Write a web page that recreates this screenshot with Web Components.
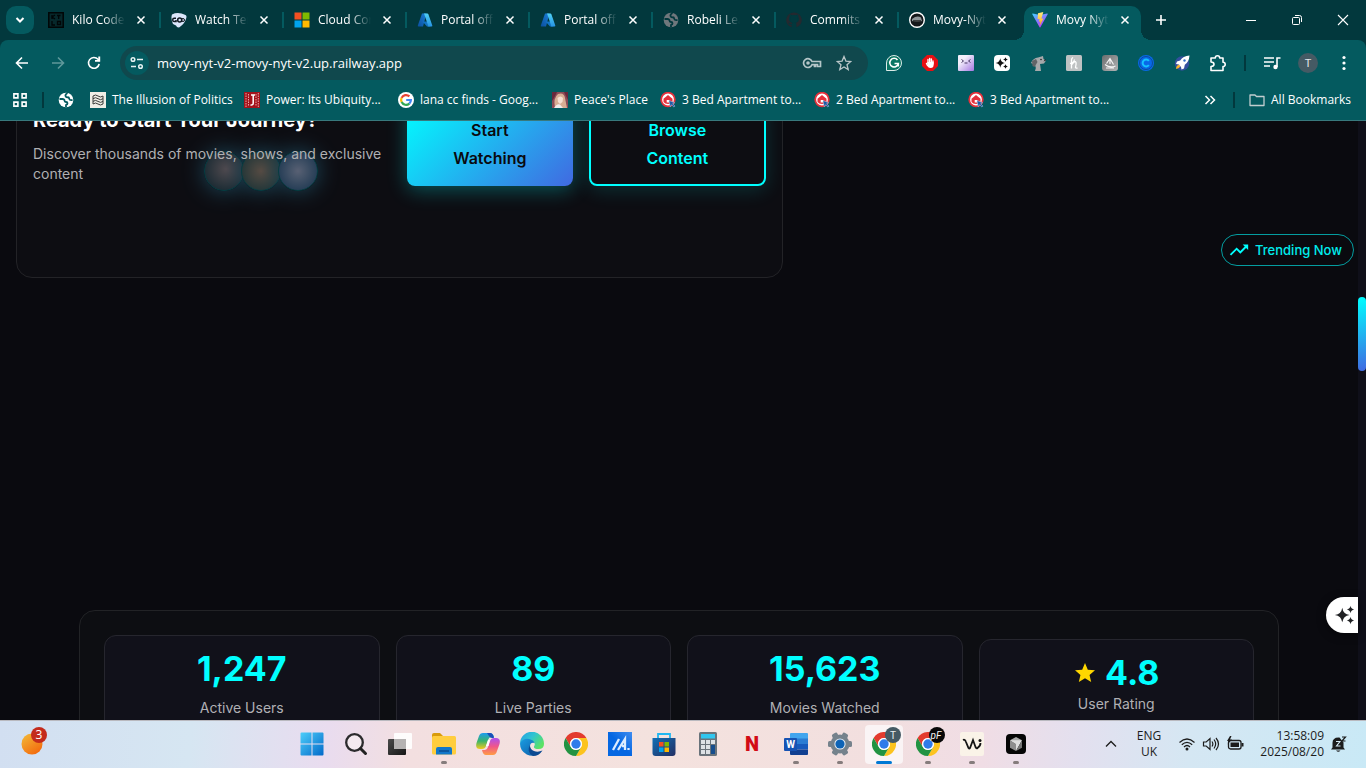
<!DOCTYPE html>
<html lang="en">
<head>
<meta charset="utf-8">
<title>Movy Nyt</title>
<style>
html,body{height:100%;margin:0}
body{font-family:"Open Sans","Noto Sans",sans-serif;font-size:12px;overflow:hidden;background:#0a0a0f;
--strip:#02383d;--bar:#045a5f;--field:#10484d;--cyan:#00ffff}
</style>
</head>
<body>
<desktop-screen></desktop-screen>
<script>
const chrome = `<path fill="#e33b2e" d="M1.6 6A12 12 0 0 1 22.4 6H12A6 6 0 0 0 6.8 15Z"/><path fill="#fcc31e" d="M22.4 6A12 12 0 0 1 12 24L17.2 15A6 6 0 0 0 12 6Z"/><path fill="#229342" d="M12 24A12 12 0 0 1 1.6 6L6.8 15A6 6 0 0 0 17.2 15Z"/><circle cx="12" cy="12" r="6" fill="#fff"/><circle cx="12" cy="12" r="4.7" fill="#2f7bea"/>`;
const globe = c => `<circle cx="8" cy="8" r="7.3" fill="${c[0]}"/><path d="M1.500 7h3q2 0 2 1.500T8 10t1.500 1.300-1.500 1.700v2M9.500 1q-2.500 1.500-2 3t2 1.300 1.800 1.500T14.500 8" fill="none" stroke="${c[1]}" stroke-width="1.800"/>`;
const azure = `<defs><linearGradient id="a" x1="0" y1="1" x2="1" y2="0"><stop stop-color="#0b4f9e"/><stop offset="1" stop-color="#1b7ed6"/></linearGradient><linearGradient id="b" y2="1" x2="0"><stop stop-color="#4fd0f5"/><stop offset="1" stop-color="#2793e3"/></linearGradient></defs><path fill="url(#a)" d="M5 1.500h4.500L6 14.500H1.500q-1 0-.7-1Z"/><path fill="#1273c4" d="M5.500 9.500h6l2 5H10Z"/><path fill="url(#b)" d="M6.500 1.500h4q.6 0 .8.6l4 11.300q.3 1.100-.8 1.100h-4q.9-.2.6-1.100L7.200 2.100q-.2-.6-.7-.6Z"/>`;
const house = `<circle cx="8" cy="7.500" r="6.800" fill="#fff" stroke="#e5303b" stroke-width="1.800"/><path d="M8 3 3.500 6.800V10q1.500 2 4.500 2t4.500-2V6.800Z" fill="#e5303b"/><path d="M6.700 8h2.600v2.500H6.700Z" fill="#fff"/><path d="M9 8.500l1.200 6.300 1.400-2 2.400 2.300 1-1-2.300-2.300 2-1Z" fill="#1c58a4" stroke="#b7d3f3" stroke-width=".5"/>`;
const sparkle = c => `<path fill="${c}" d="M9 4q1 7 8 8-7 1-8 8-1-7-8-8 7-1 8-8ZM18 2q.6 3.400 4 4-3.400.6-4 4-.6-3.400-4-4 3.400-.6 4-4ZM18 14q.6 3.400 4 4-3.400.6-4 4-.6-3.400-4-4 3.400-.6 4-4Z"/>`;
/* name: [viewBox size, markup] */
const ICONS = {
down:[16,`<path d="M4.500 6 8 9.500 11.500 6" fill="none" stroke="#fff" stroke-width="2"/>`],
kilo:[16,`<path fill="#06282b" stroke="#010607" stroke-width="1.500" d="M.8.8h14.400v14.400H.8z"/><path d="M4 3v4m3-4-3 2 3 2M9 3.500h3.500M10.700 3v4M4 9v4h3M9.500 9.500h3v3h-3z" fill="none" stroke="#010607" stroke-width="1.300"/>`],
watch:[16,`<path fill="#dbe6fb" d="M1 2.500Q7-.5 14.500 3q1.500 1 .8 3-1 5-6.800 9.300Q6 16 5 13.500L2 12Q-.5 6 1 2.500Z"/><path d="M5 6.300H3.200q-1.500 0-1.500 1.600t1.500 1.600H5V8" fill="none" stroke="#101820" stroke-width="1.500"/><circle cx="8.700" cy="8" r="2" fill="none" stroke="#101820" stroke-width="1.500"/><circle cx="12" cy="8" r="1.500" fill="none" stroke="#101820"/>`],
ms:[16,`<path fill="#f25022" d="M.5.5h7v7h-7z"/><path fill="#7fba00" d="M8.500.5h7v7h-7z"/><path fill="#00a4ef" d="M.5 8.500h7v7h-7z"/><path fill="#ffb900" d="M8.500 8.500h7v7h-7z"/>`],
azure:[16,azure],
globe:[16,globe(['#fff','#045a5f'])],
globegrey:[16,globe(['#6f777c','#02383d'])],
github:[16,`<path fill="#24292f" d="M8 .5a7.500 7.500 0 0 0-2.400 14.700v-2.500q-2 .4-2.600-1l-.8-1 1.500.4q.8 1.400 2.200.8l.4-1.200Q3 10.300 3 7q0-1.200.8-2.200-.3-1 .2-2.200 1 0 2.200 1h3.600q1.200-1 2.200-1 .5 1.200.2 2.200.8 1 .8 2.200 0 3.300-3.300 3.700.7.600.7 1.700v2.800A7.500 7.500 0 0 0 8 .5Z"/><circle cx="8" cy="7" r="4" fill="#02383d"/>`],
movy:[16,`<circle cx="8" cy="8" r="7.300" fill="#14171a" stroke="#fff" stroke-width="1.400"/><path d="M3 7q5-4 9-1.500L13 9q-5 2-10 0Z" fill="#8f9699"/><path d="M4 9h8" stroke="#111" stroke-width="1.300"/>`],
vite:[16,`<defs><linearGradient id="a" x2=".6" y2="1"><stop stop-color="#41d1ff"/><stop offset="1" stop-color="#bd34fe"/></linearGradient><linearGradient id="b" y2="1" x2="0"><stop stop-color="#ffea83"/><stop offset="1" stop-color="#ffa800"/></linearGradient></defs><path fill="url(#a)" d="m.3 2.200 7.300 13q.4.600.8 0l7.300-13q.2-.7-.5-.6L8 3 .8 1.600q-.7-.1-.5.6Z"/><path fill="url(#b)" d="M11.300.1 6 1.200l-.4 6 1.900-.4-.6 2.900 1.500-.4-1 4.900 4-7.800-2 .3Z"/>`],
close:[12,`<path d="m2.500 2.500 7 7m0-7-7 7" stroke="#fff" stroke-width="1.500"/>`],
plus:[16,`<path d="M8 3v10M3 8h10" stroke="#fff" stroke-width="1.600"/>`],
min:[12,`<path d="M1 6.500h10" stroke="#fff"/>`],
max:[12,`<rect x="1.500" y="3.500" width="7" height="7" rx="1" fill="none" stroke="#fff"/><path d="M4 1.500h4.500q2 0 2 2V8" fill="none" stroke="#fff"/>`],
winx:[12,`<path d="m1 1 10 10m0-10L1 11" stroke="#fff" stroke-width="1.100"/>`],
back:[16,`<path d="M14 8H3M8 2.500 2.500 8 8 13.500" fill="none" stroke="#fff" stroke-width="1.600"/>`],
fwd:[16,`<path d="M2 8h11M8 2.500 13.500 8 8 13.500" fill="none" stroke="#5f989b" stroke-width="1.600"/>`],
reload:[16,`<path d="M13.200 9A5.400 5.400 0 1 1 12 4.300L13.500 6" fill="none" stroke="#fff" stroke-width="1.600"/><path d="M14.200 1.500v5.300H9V5h3.300V1.500Z" fill="#fff"/>`],
tune:[16,`<g fill="none" stroke="#e6f2f2" stroke-width="1.500"><circle cx="4" cy="4.500" r="1.800"/><path d="M8 4.500h6M2 11.500h5"/><circle cx="11.500" cy="11.500" r="1.800"/></g>`],
key:[20,`<g fill="none" stroke="#b5c6c8" stroke-width="1.700"><path d="M10 8.500h8.500v5h-3v-2h-2v2h-1v-1.800H10A4.400 4.400 0 1 1 10 8.500Z"/></g><circle cx="6" cy="10" r="1.800" fill="#b5c6c8"/>`],
star:[16,`<path d="m8 1.500 1.900 4.600 4.900.4-3.800 3.200 1.200 4.800L8 11.900l-4.200 2.600L5 9.700 1.200 6.500l4.900-.4Z" fill="none" stroke="#b9c6c8" stroke-width="1.300"/>`],
grammarly:[16,`<path d="M.5 15.500V8A7.500 7.500 0 1 1 8 15.500Z" fill="#0b7563" stroke="#dcebe8"/><path d="M11.500 5A4.300 4.300 0 1 0 12.300 8.500H8.500m3.800 0v3" fill="none" stroke="#fff" stroke-width="1.600"/>`],
hand:[16,`<path fill="#e70f13" d="M5 0h6l5 5v6l-5 5H5l-5-5V5Z"/><path d="M6 8V4.500M7.700 8V3.500M9.400 8V4M11 9V6M5.500 10.500 4.500 8.500" stroke="#fff" stroke-width="1.400" stroke-linecap="round"/><path fill="#fff" d="M5.300 7h6.300v3q0 3-3 3t-3.300-3Z"/>`],
face:[16,`<defs><linearGradient id="a" x2="1" y2="1"><stop offset=".3" stop-color="#f3effb"/><stop offset="1" stop-color="#a476e2"/></linearGradient></defs><rect width="16" height="16" rx="1" fill="url(#a)"/><path d="m3.500 4.500 2 1.500-2 1.500m9-3-2 1.500 2 1.500M6.500 8h3" fill="none" stroke="#4b3a66"/>`],
sparkbox:[16,`<rect width="16" height="16" rx="4" fill="#fff"/><svg x="1" y="1" width="14" height="14" viewBox="0 0 24 24">${sparkle('#111')}</svg>`],
dog:[16,`<path fill="#a7a9ab" d="M1 8q2-5 7-5.500L13 1l.5 3L16 5.500 14 8.500l-4 .5 1 7H5q1.500-3.500 0-6Z"/><path d="m2 6 4-2 1.500 3L4.500 12 2.500 11Z" fill="#606467"/><circle cx="11" cy="4.500" r=".8" fill="#222"/><path d="m13.500 6.500 2.500-1-.8-1.500Z" fill="#222"/>`],
honey:[16,`<rect width="16" height="16" rx="1.500" fill="#bfc2c3"/><path d="M5.500 13.500V5q0-2 1.600-2.500M5.500 10Q9 5 10 7.500q.4 1.500-.5 5 .5 1 2 .3M4 8.500q4-1 4.500-4" fill="none" stroke="#fff" stroke-width="1.300"/>`],
sail:[16,`<defs><linearGradient id="a" y2="1"><stop stop-color="#6b6d6e"/><stop offset="1" stop-color="#b3b4b5"/></linearGradient></defs><rect width="16" height="16" rx="3" fill="url(#a)"/><path d="M4.500 8.500 8 3.500 11.500 9.500M8 4v5M3 9.500q5 4 10.500 1.500M4 13h8" fill="none" stroke="#f5f5f5" stroke-width="1.200"/>`],
blue:[16,`<circle cx="8" cy="8" r="8" fill="#0868e8"/><circle cx="8" cy="8" r="6.500" fill="none" stroke="#0a4d9c"/><path d="M10.800 6A3.400 3.400 0 1 0 10.800 10" fill="none" stroke="#16c2ff" stroke-width="2"/>`],
rocket:[16,`<circle cx="8" cy="8.500" r="7.200" fill="#334f9d"/><path d="M2 14q0-4 3.500-4.500l1 1.500Q5.500 13.500 2 14Z" fill="#f8b12b"/><path fill="#fff" d="M15.500.5Q9 1 6.200 5.500L3 6.500 2 9l3 .5L7 12l.5 2.500 2.500-1 .8-3.700Q15 7 15.500.5Z"/><circle cx="10.500" cy="5.500" r="1.200" fill="#3770c8"/>`],
puzzle:[18,`<path d="M2 4h4.300a2.200 2.200 0 0 1 4.400 0H14v4.200a2.200 2.200 0 0 1 0 4.400V16.500H2v-4q3-.2 3-2.300T2 8Z" fill="none" stroke="#fff" stroke-width="1.600" stroke-linejoin="round"/>`],
queue:[18,`<path d="M1 4h10M1 8h10M1 12h6" stroke="#fff" stroke-width="1.600"/><path d="M14 13V4h3.500" fill="none" stroke="#fff" stroke-width="1.600"/><circle cx="12.500" cy="13" r="2.200" fill="#fff"/>`],
menu:[16,`<g fill="#fff"><circle cx="8" cy="2.500" r="1.600"/><circle cx="8" cy="8" r="1.600"/><circle cx="8" cy="13.500" r="1.600"/></g>`],
avatar:[20,`<circle cx="10" cy="10" r="10" fill="#455a64"/><text x="10" y="14" text-anchor="middle" font-size="11" fill="#e2e8ea" font-family="Roboto">T</text>`],
apps:[16,`<g fill="none" stroke="#fff" stroke-width="1.600"><path d="M1.900 1.900h4v4h-4zM10.100 1.900h4v4h-4zM1.900 10.100h4v4h-4zM10.100 10.100h4v4h-4z"/></g>`],
paper:[16,`<path fill="#efeee6" d="M0 0h16v16H0z"/><path d="M3 4q2.500-2 5 0t5 0v8q-2.500 2-5 0t-5 0ZM3 6.700q2.500-2 5 0t5 0M3 9.400q2.500-2 5 0t5 0" fill="none" stroke="#3b3c3a"/>`],
jred:[16,`<path fill="#a3121b" d="M0 0h16v16H0z"/><path d="M2 1v14M4.500 2v12M12 2v12M14.300 1v14" stroke="#e9a7a7" stroke-dasharray="1.500 1"/><path d="M7 3h4M9.200 3v8q0 2.500-2.700 2" fill="none" stroke="#fff" stroke-width="1.500"/>`],
google:[16,`<circle cx="8" cy="8" r="8" fill="#fff"/><g fill="none" stroke-width="2.200"><path d="M11.400 4.400A4.900 4.900 0 0 0 3.600 5.900" stroke="#ea4335"/><path d="M3.600 5.900a4.900 4.900 0 0 0 0 4.200" stroke="#fbbc05"/><path d="M3.600 10.100a4.900 4.900 0 0 0 7.700 1.500" stroke="#34a853"/><path d="M11.300 11.600A4.900 4.900 0 0 0 12.900 8H8.200" stroke="#4285f4"/></g>`],
photo:[16,`<path fill="#8c4b57" d="M0 0h16v16H0z"/><path d="M3 16Q1 6 6 2q6-2 7 4l2 10Z" fill="#d8ad94"/><path d="M5.500 6q3-3 5.500 0l-.5 4-2.500 2-2-2Z" fill="#f6dfd2"/><path d="M2 16q3-5 6-3.500l3 3.500Z" fill="#f2ecec"/><path d="M0 0h5L2 6l-2 3ZM12 0h4v8Z" fill="#67283c"/>`],
house:[16,house],
more:[12,`<path d="m1.500 2 4 4-4 4M6.500 2l4 4-4 4" fill="none" stroke="#fff" stroke-width="1.500"/>`],
folder:[16,`<path d="M1 3h5l1.500 1.500H15V13.500H1Z" fill="none" stroke="#c1cdcf" stroke-width="1.300" stroke-linejoin="round"/>`],
trend:[24,`<path fill="#0ff" d="m16 6 2.290 2.290-4.880 4.880-4-4L2 16.590 3.410 18l6-6 4 4 6.300-6.290L22 12V6z"/>`],
gold:[24,`<path fill="#ffd700" d="M12 17.270 18.180 21l-1.640-7.030L22 9.240l-7.190-.61L12 2 9.190 8.630 2 9.240l5.460 4.730L5.820 21z"/>`],
sparkle:[24,sparkle('#202124')],
weather:[24,`<defs><linearGradient id="a" x2=".7" y2="1"><stop stop-color="#f2bd3a"/><stop offset="1" stop-color="#f36a0d"/></linearGradient></defs><circle cx="12" cy="12" r="10.500" fill="url(#a)"/>`],
start:[24,`<defs><linearGradient id="a" gradientUnits="userSpaceOnUse" x2="24" y2="24"><stop stop-color="#4fd0fb"/><stop offset="1" stop-color="#0067c8"/></linearGradient></defs><path fill="url(#a)" d="M.5 1.500q0-1 1-1h10v11H.5zM12.500.5h10q1 0 1 1v10h-11zM.5 12.500h11v11h-10q-1 0-1-1zM12.500 12.500h11v10q0 1-1 1h-10z"/>`],
search:[24,`<circle cx="10.500" cy="10.500" r="8.300" fill="#f4eaf0" stroke="#2b2b2d" stroke-width="2.300"/><path d="m16.500 16.500 5 5" stroke="#222" stroke-width="3" stroke-linecap="round"/>`],
task:[24,`<defs><linearGradient id="a" y2="1"><stop stop-color="#4b4b4b"/><stop offset="1" stop-color="#151515"/></linearGradient></defs><rect y="7" width="18" height="16" rx="1" fill="url(#a)"/><rect x="6" y="1" width="18" height="16" rx="1" fill="#fff" fill-opacity=".9"/><path fill="#b5b2b2" d="M6 7h12v10H6z"/>`],
files:[24,`<path fill="#d99b0b" d="M0 3q0-2 2-2h6l3 3v4H0Z"/><rect y="4" width="24" height="18.500" rx="1.500" fill="#ffcd3e"/><path d="M4 22.500V17q0-2 2-2h12q2 0 2 2v5.500Z" fill="#1277c9"/><path d="M7 19h10" stroke="#0a4c91" stroke-width="1.500"/>`],
copilot:[24,`<defs><linearGradient id="a" y2="1" x2="0"><stop stop-color="#1d9cf0"/><stop offset=".5" stop-color="#39b56b"/><stop offset="1" stop-color="#f3ca1c"/></linearGradient><linearGradient id="b" y2="1" x2="0"><stop stop-color="#ac50ef"/><stop offset=".5" stop-color="#f0568a"/><stop offset="1" stop-color="#ff9d43"/></linearGradient></defs><path fill="url(#a)" d="M7 1h7q3 0 4 4h-3q-2 0-3 3l-2 6q-1 3-4 3H4q-5 0-3.500-6L3 4q1-3 4-3Z"/><path fill="url(#b)" d="M17 23h-7q-3 0-4-5h3q2 0 3-3l2-6q1-3 4-3h2q5 0 3.500 6L21 19q-1 4-4 4Z"/><path d="m12 8-2 6h2.500l1.500-6Z" fill="#fff"/><path d="M11 1h3q3 0 4 5h-2q-2 0-3-2Z" fill="#1b4fb8"/>`],
edge:[24,`<defs><linearGradient id="a" x2="1" y2=".6"><stop stop-color="#249de4"/><stop offset=".5" stop-color="#31c4d2"/><stop offset="1" stop-color="#5be264"/></linearGradient><linearGradient id="b" y2="1"><stop stop-color="#1b9de2"/><stop offset="1" stop-color="#0c59a4"/></linearGradient></defs><path fill="url(#a)" d="M0 11.500A12 12 0 0 1 24 12q0 5-5.500 5-5 0-4.500-2.500 2-3-1-5Q6 6 0 11.500Z"/><path fill="url(#b)" d="M0 11.500Q3 6 9 7q5 1 5.500 4-4-1-4.500 3 0 6 6.500 7.500l3-.5A12 12 0 0 1 0 11.500Z"/><path fill="#0b4a92" d="M10 13q-4 7 3 11 6 0 9.500-5.500-4.500 2-8.500.5Q9.500 17 10 13Z"/>`],
chrome:[24,chrome],
asus:[24,`<defs><linearGradient id="a" y2="0" y1="1"><stop offset=".5" stop-color="#0567e2"/><stop offset="1" stop-color="#408cf0"/></linearGradient></defs><path fill="url(#a)" d="M0 0h24v24H0z"/><path d="m5 18 6-11M10 18l7-11v11M14 14h3M20.500 16v2" fill="none" stroke="#dcecff" stroke-width="2.300"/>`],
store:[24,`<defs><linearGradient id="a" y2="1"><stop stop-color="#1270b6"/><stop offset="1" stop-color="#232e62"/></linearGradient></defs><path d="M6 6V2h12v4" fill="none" stroke="#20b7f1" stroke-width="1.800"/><path fill="url(#a)" d="M.5 6h23v15q0 3-3 3h-17q-3 0-3-3Z"/><path fill="#f25022" d="M7 10h4.500v4.500H7z"/><path fill="#7fba00" d="M12.500 10H17v4.500h-4.500z"/><path fill="#00a4ef" d="M7 15.500h4.500V20H7z"/><path fill="#ffb900" d="M12.500 15.500H17V20h-4.500z"/>`],
calc:[24,`<rect x="3" width="18" height="24" rx="1.500" fill="#69737b"/><path fill="#31c6ef" d="M5 2h14v4.500H5z"/><path fill="#dce1e5" d="M5 8h4v4H5zM10 8h4v4h-4zM15 8h4v4h-4zM5 13h4v4H5zM10 13h4v4h-4zM5 18h4v4H5zM10 18h4v4h-4z"/><path fill="#164d8c" d="M15 13h4v9h-4z"/>`],
netflix:[24,`<text x="12" y="19" text-anchor="middle" font-family="Roboto" font-weight="900" font-size="20" fill="#d20b16">N</text>`],
word:[24,`<path fill="#41a5ee" d="M7 1h16q1 0 1 1v5H6V2q0-1 1-1z"/><path fill="#2b7cd3" d="M6 6.500h18V12H6z"/><path fill="#185abd" d="M6 12h18v5.500H6z"/><path fill="#103f91" d="M6 17.500h18V22q0 1-1 1H7q-1 0-1-1z"/><rect y="6" width="13" height="13" rx="1" fill="#1653b3"/><text x="6.500" y="16" text-anchor="middle" font-family="Roboto" font-weight="700" font-size="10" fill="#fff">W</text>`],
gear:[24,`<g fill="#75828c"><circle cx="12" cy="12" r="9.500"/><rect x="9" width="6" height="24" rx="1.500" transform="rotate(30 12 12)"/><rect x="9" width="6" height="24" rx="1.500" transform="rotate(90 12 12)"/><rect x="9" width="6" height="24" rx="1.500" transform="rotate(150 12 12)"/></g><circle cx="12" cy="12" r="5.600" fill="#e8eef3"/><circle cx="12" cy="12" r="4.600" fill="#0d63b6"/>`],
chromet:[32,`<svg x="1" y="5" width="24" height="24" viewBox="0 0 24 24">${chrome}</svg><circle cx="22" cy="8" r="8" fill="#455a64"/><text x="22" y="12" text-anchor="middle" font-family="Roboto" font-size="10" fill="#e9eef0">T</text>`],
chromef:[32,`<svg x="1" y="5" width="24" height="24" viewBox="0 0 24 24">${chrome}</svg><circle cx="22" cy="8" r="8" fill="#080808"/><text x="21" y="12" text-anchor="middle" font-family="Roboto" font-style="italic" font-size="10" fill="#f5f5f5">pF</text>`],
wave:[24,`<rect width="24" height="24" rx="2" fill="#faf3e8"/><path d="M3 8q2-1 3 2l2.500 6q.8 1 1.500 0l3-8 2.500 7q1 2 2 1 3-2 3-5" fill="none" stroke="#151515" stroke-width="1.800"/><circle cx="20" cy="8.500" r="1.500" fill="#151515"/>`],
cube:[24,`<rect x="2" y="2" width="20" height="20" rx="4" fill="#050505"/><path fill="#a9a9a9" d="m12 5 6 3.300L12 12 6 8.300Z"/><path fill="#8e8e8e" d="m6 8.300 6 3.700v7l-6-3.300Z"/><path fill="#dedede" d="M6 8.300h12L12 19v-7Z"/><path fill="#777" d="M18 8.300v7.400L12 19Z"/>`],
up:[12,`<path d="m1 8.500 5-5 5 5" fill="none" stroke="#1c1c1c" stroke-width="1.300"/>`],
wifi:[18,`<g fill="none" stroke="#1c1c1c" stroke-width="1.200"><path d="M1.500 7.500q7.500-7 15 0M3.800 9.800q5.200-5 10.400 0M6 12q3-3 6 0"/></g><circle cx="9" cy="14" r="1.500" fill="#1c1c1c"/>`],
sound:[18,`<g fill="none" stroke="#1c1c1c" stroke-width="1.200"><path d="M1.500 7h2.700L8 3.500v11L4.200 11H1.500ZM10 6.500q1.700 2.500 0 5M12 4.500q3.300 4.500 0 9M14 3q5 6 0 12"/></g>`],
battery:[18,`<rect x="2.500" y="5.500" width="12.500" height="8.500" rx="2" fill="none" stroke="#1c1c1c" stroke-width="1.300"/><path d="M4.500 7.500H13V12H4.500Zm11 .5h2v3.500h-2Z" fill="#1c1c1c"/><path d="M4 1 1 6h2L1.500 9.500 6 4.500H4L5.500 1Z" fill="#1c1c1c"/>`],
bell:[18,`<path d="M2.500 12.500V8q0-5.500 6-5.500h1l4 5v5l1.500 2H1ZM6 15.500h4.500q-2.200 2.500-4.500 0Z" fill="#1c1c1c"/><path d="M6 6.500h4L6.500 11h4" fill="none" stroke="#d7ebf5" stroke-width="1.100"/><path d="M12 2h3.500L12 6h3.500" fill="none" stroke="#1c1c1c" stroke-width="1.200"/>`]
};
function define(tag, css, html){
  customElements.define(tag, class extends HTMLElement{
    constructor(){ super(); this.attachShadow({mode:'open'}); }
    connectedCallback(){
      const t=document.createElement('template');
      t.innerHTML=`<style>*{box-sizing:border-box}button,input{font:inherit;color:inherit;background:none;border:0;margin:0;padding:0}a{color:inherit;text-decoration:none}${css}</style>${typeof html==='function'?html(this):html}`;
      this.shadowRoot.replaceChildren(t.content.cloneNode(true));
    }
  });
}
const ic=(n,s=16)=>`<ui-icon name="${n}" size="${s}"></ui-icon>`;
define('ui-icon',`:host{display:block;flex:none}svg{display:block}`,e=>{
  const [v,m]=ICONS[e.getAttribute('name')], s=e.getAttribute('size')||16;
  return `<svg width="${s}" height="${s}" viewBox="0 0 ${v} ${v}" aria-hidden="true">${m}</svg>`;});

define('browser-tab',`
:host{display:block;position:relative;flex:none;width:117px;height:34px;color:#fff}
.t{display:flex;align-items:center;height:28px;padding:0 8px;gap:8px}
.n{flex:1;min-width:0;text-align:left;white-space:nowrap;overflow:hidden;line-height:20px;-webkit-mask-image:linear-gradient(90deg,#000 60%,transparent);mask-image:linear-gradient(90deg,#000 60%,transparent)}
.x{width:16px;height:16px;display:grid;place-items:center}
:host([active]){background:var(--bar);border-radius:10px 10px 0 0}
:host([active])::before,:host([active])::after{content:"";position:absolute;bottom:0;width:10px;height:10px;background:radial-gradient(circle at 0 0,transparent 10px,var(--bar) 10px)}
:host([active])::before{right:100%}
:host([active])::after{left:100%;background:radial-gradient(circle at 100% 0,transparent 10px,var(--bar) 10px)}
:host([line])::after{content:"";position:absolute;left:119px;top:6px;width:2px;height:16px;background:#045a5f}`,
e=>`<div class="t">${ic(e.getAttribute('icon'))}<button class="n"><slot></slot></button><button class="x" aria-label="Close tab">${ic('close',12)}</button></div>`);

define('tab-strip',`
:host{display:flex;height:40px;padding:6px 0 0 6px;background:var(--strip)}
.s{width:28px;height:28px;border-radius:10px;background:var(--bar);display:grid;place-items:center}
nav{display:flex;gap:6px;margin-left:6px}
.p{width:28px;height:28px;margin-left:6px;display:grid;place-items:center}
.w{display:flex;margin-left:auto}.w button{width:46px;height:28px;display:grid;place-items:center}`,
`<button class="s" aria-label="Search tabs">${ic('down')}</button><nav>${
[['kilo','Kilo Code'],['watch','Watch Ter'],['ms','Cloud Con'],['azure','Portal offi'],['azure','Portal offi'],['globegrey','Robeli Lea'],['github','Commits ·'],['movy','Movy-Nyt'],['vite','Movy Nyt']]
.map(([i,t],k)=>`<browser-tab icon="${i}" ${k===8?'active':k<7?'line':''}>${t}</browser-tab>`).join('')}</nav>
<button class="p" aria-label="New tab">${ic('plus')}</button>
<div class="w"><button aria-label="Minimize">${ic('min',12)}</button><button aria-label="Restore">${ic('max',12)}</button><button aria-label="Close">${ic('winx',12)}</button></div>`);

define('browser-toolbar',`
:host{display:block;background:var(--strip);color:#fff}
.b{display:flex;align-items:center;height:46px;padding:0 4px;background:var(--bar);border-radius:8px 8px 0 0}
.i{width:36px;height:36px;display:grid;place-items:center;flex:none}
.o{flex:1;display:flex;align-items:center;height:34px;margin:0 8px;padding:0 8px 0 5px;border-radius:17px;background:var(--field)}
.o .c{width:24px;height:24px;border-radius:50%;background:var(--bar);display:grid;place-items:center;margin-right:8px}
.o .k{width:32px;height:32px;display:grid;place-items:center}
input{flex:1;min-width:0;font-size:13px;height:24px;outline:0}
.l{width:2px;height:16px;margin:0 8px;background:var(--strip)}`,
`<div class="b"><button class="i" aria-label="Back">${ic('back')}</button><button class="i" aria-label="Forward">${ic('fwd')}</button><button class="i" aria-label="Reload">${ic('reload')}</button>
<div class="o"><button class="c" aria-label="Site information">${ic('tune')}</button><input aria-label="Address" value="movy-nyt-v2-movy-nyt-v2.up.railway.app"><button class="k" aria-label="Passwords">${ic('key',20)}</button><button class="k" aria-label="Bookmark">${ic('star')}</button></div>
${['grammarly','hand','face','sparkbox','dog','honey','sail','blue','rocket'].map(n=>`<button class="i" aria-label="${n}">${ic(n)}</button>`).join('')}
<button class="i" aria-label="Extensions">${ic('puzzle',18)}</button><span class="l"></span>
<button class="i" aria-label="Media">${ic('queue',18)}</button><button class="i" aria-label="Profile">${ic('avatar',20)}</button><button class="i" aria-label="Menu">${ic('menu')}</button></div>`);

define('bookmarks-bar',`
:host{display:flex;align-items:center;height:35px;padding:0 15px 6px 12px;box-sizing:border-box;height:41px;margin-top:0;background:var(--bar);color:#fff;border-bottom:1px solid #38797d;line-height:20px}
:host{height:35px;padding-bottom:0;padding-top:0;height:35px;align-items:flex-start}
:host>*{height:28px}
button,a{display:flex;align-items:center;gap:6px;height:28px}
a{flex:0 0 154px;white-space:nowrap}
a.s{flex-basis:108px}a.g{flex-basis:32px}
.l{width:2px;height:16px;background:var(--strip);margin:6px 14px 0}
.e{margin-left:auto}.e+.l{margin:6px 14px 0 17px}a.f{flex:none;gap:6px}`,
`<button aria-label="Apps">${ic('apps')}</button><span class="l"></span><a class="g" href="#" aria-label="Site">${ic('globe')}</a>
${[['paper','The Illusion of Politics'],['jred','Power: Its Ubiquity...'],['google','lana cc finds - Goog...'],['photo',"Peace's Place",'s'],['house','3 Bed Apartment to...'],['house','2 Bed Apartment to...'],['house','3 Bed Apartment to...']]
.map(([i,t,c])=>`<a href="#" class="${c||''}">${ic(i)}<span>${t}</span></a>`).join('')}
<button class="e" aria-label="More bookmarks">${ic('more',12)}</button><span class="l"></span><a class="f" href="#">${ic('folder')}<span>All Bookmarks</span></a>`);

define('cta-card',`
:host{display:grid;position:relative;grid-template-columns:minmax(0,1fr) 166px 177px;gap:16px;align-items:center;height:268px;padding:16px;border:1px solid #232327;border-radius:16px;background:#0d0d12}
h2{margin:0;font-size:20px;line-height:28px;font-weight:700;color:#fff;white-space:nowrap}
p{margin:10px 0 0;font-size:14px;line-height:20px;color:#b0b0b2}
.t{position:relative;padding-top:2px}
button{height:84px;padding:14px 40px;font-size:16px;line-height:28px;font-weight:600;border-radius:8px}
.a{color:#0a0a0f;background:linear-gradient(135deg,#0ff,#4169e1);box-shadow:0 4px 20px rgba(0,255,255,.3)}
.b{color:var(--cyan);border:2px solid var(--cyan);padding:12px 38px;box-shadow:0 4px 20px rgba(0,255,255,.15)}
.v{position:absolute;left:187px;bottom:86px;display:flex;opacity:.5}
.v i{width:40px;height:40px;margin-right:-3px;border-radius:50%;border:1px solid #006c73;box-shadow:0 0 22px #2f86a8}
.v i:nth-child(1){background:radial-gradient(circle at 55% 45%,#94868b,#2b4a56 75%)}
.v i:nth-child(2){background:radial-gradient(circle,#a28a74,#3a605f 75%)}
.v i:nth-child(3){background:radial-gradient(circle,#a3b3d4,#3c6d98 75%)}`,
`<div class="v" aria-hidden="true"><i></i><i></i><i></i></div><div class="t"><h2>Ready to Start Your Journey?</h2><p>Discover thousands of movies, shows, and exclusive content</p></div><button class="a">Start Watching</button><button class="b">Browse Content</button>`);

define('trend-chip',`
button{display:flex;align-items:center;gap:5px;height:32px;padding:0 11px 0 6px;border:1px solid #049da0;border-radius:16px;font-size:13px;font-weight:500;color:#00eded}:host{display:block}`,
`<button>${ic('trend',22)}<slot></slot></button>`);

define('stat-card',`
:host{display:block;height:104px;padding:12px;border:1px solid #26262e;border-radius:12px;background:#11111a;text-align:center}
:host([icon]){height:96px}
.n{display:flex;justify-content:center;align-items:center;gap:8px;font-size:34px;line-height:42px;font-weight:700;color:var(--cyan);margin-bottom:8px}
:host([icon]) .n{margin-bottom:0}
.l{font-size:14px;line-height:20px;color:#b0b0b4}`,
e=>`<div class="n">${e.hasAttribute('icon')?ic('gold',24):''}<span>${e.getAttribute('value')}</span></div><div class="l"><slot></slot></div>`);

define('stats-panel',`
:host{display:grid;grid-template-columns:repeat(4,minmax(0,1fr));gap:16px;align-items:center;max-width:1200px;margin:332px auto 0;padding:24px;border:1px solid #222326;border-radius:16px;background:#0d0e12}`,
`<stat-card value="1,247">Active Users</stat-card><stat-card value="89">Live Parties</stat-card><stat-card value="15,623">Movies Watched</stat-card><stat-card value="4.8" icon>User Rating</stat-card>`);

define('site-page',`
:host{display:flex;flex:1;min-height:0;overflow:hidden;position:relative;background:#0a0a0f;font-family:Inter,sans-serif}
main{flex:1;min-width:0;margin-top:-111px}
.h{display:grid;grid-template-columns:4fr 3fr;align-items:end;padding-left:16px}
trend-chip{justify-self:end;margin:0 4px 12px 0}
.s{width:8px;background:#0f0f19;padding-top:176px}
.s i{display:block;height:74px;border-radius:4px;background:linear-gradient(165deg,#0ff,#4169e1)}
.f{position:absolute;right:8px;bottom:87px;width:32px;height:36px;border-radius:18px 0 0 18px;background:#fff;display:grid;place-items:center;padding-left:5px;box-shadow:0 2px 8px #0008}`,
`<main><div class="h"><cta-card></cta-card><trend-chip>Trending Now</trend-chip></div><stats-panel></stats-panel></main><div class="s"><i></i></div><button class="f" aria-label="Assistant">${ic('sparkle',22)}</button>`);

define('task-bar',`
:host{display:grid;grid-template-columns:15fr auto 17fr;align-items:center;height:48px;padding-bottom:2px;color:#1c1c1c;border-top:1px solid #b9b9bf;background:linear-gradient(95deg,#d2dff1 0,#d6e6f2 14%,#e9dcef 24%,#f3dfe0 30%,#f4e2de 48%,#f2dfdf 64%,#f0dde5 72%,#e3e0ef 79%,#d5e7f3 87%,#c9e9f6)}
.w{position:relative;width:24px;margin-left:20px}
.w b{position:absolute;left:11px;top:-5px;width:16px;height:16px;border-radius:50%;background:#c42b1c;color:#fff;font-weight:400;line-height:16px;text-align:center}
nav{display:flex}
nav button{position:relative;width:44px;height:44px;display:grid;place-items:center}
.r::after{content:"";position:absolute;left:19px;bottom:2px;width:6px;height:3px;border-radius:2px;background:#857c7c}
.on::before{content:"";position:absolute;inset:3px 3px 2px;border-radius:4px;background:#faf4f5}
.on::after{bottom:2px;left:14px;width:16px;background:#0078d4}
.on ui-icon,.big ui-icon{position:relative;left:3px;top:-1px}
.y{display:flex;align-items:center;justify-content:flex-end;padding-right:18px;line-height:16px;text-align:center}
.y .g{display:flex;gap:6px;margin:0 16px 0 17px}.y .e{margin-left:20px}.y .d{text-align:right;margin-right:6px}`,
`<button class="w" aria-label="Widgets">${ic('weather',24)}<b>3</b></button><nav>${
[['start'],['search'],['task'],['files','r'],['copilot'],['edge'],['chrome'],['asus'],['store'],['calc'],['netflix'],['word','r'],['gear','r'],['chromet','r on',32],['chromef','r big',32],['wave','r'],['cube','r']]
.map(([n,c,s])=>`<button class="${c||''}" aria-label="${n}">${ic(n,s||24)}</button>`).join('')}</nav>
<div class="y"><button aria-label="Hidden icons">${ic('up',12)}</button><div class="e">ENG<br>UK</div><div class="g">${ic('wifi',18)}${ic('sound',18)}${ic('battery',18)}</div><div class="d">13:58:09<br>2025/08/20</div>${ic('bell',18)}</div>`);

define('desktop-screen',`:host{display:flex;flex-direction:column;height:100vh}tab-strip,browser-toolbar,bookmarks-bar,task-bar{flex:none}`,
`<tab-strip></tab-strip><browser-toolbar></browser-toolbar><bookmarks-bar></bookmarks-bar><site-page></site-page><task-bar></task-bar>`);
</script>
</body>
</html>
